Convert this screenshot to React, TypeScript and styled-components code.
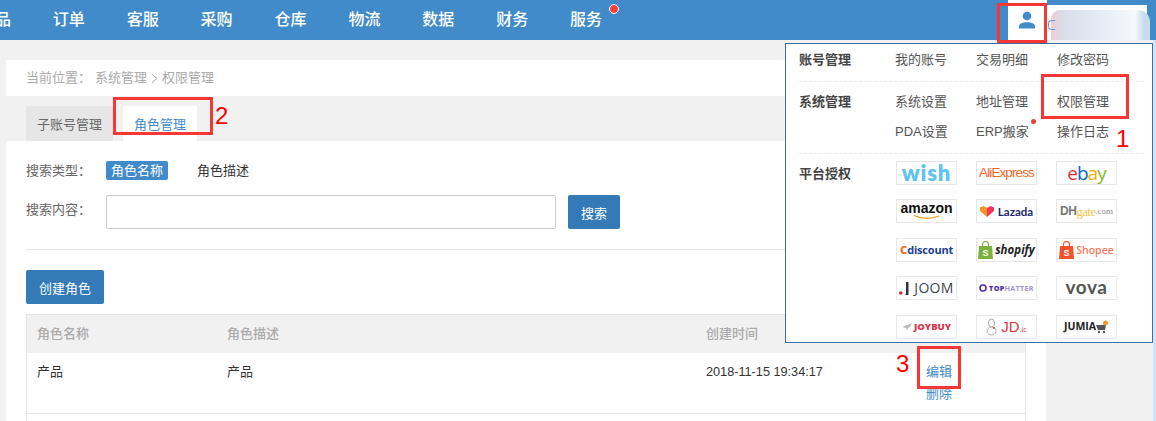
import React from 'react';
import styled, { createGlobalStyle } from 'styled-components';

const Global = createGlobalStyle`
  html, body { margin: 0; padding: 0; background: #f1f1f1; }
  body { font-family: "Liberation Sans", "Noto Sans CJK SC", sans-serif; font-size: 13px; color: #333; }
  * { box-sizing: border-box; }
`;

const Page = styled.div`
  position: relative;
  width: 1156px;
  height: 421px;
  overflow: hidden;
  background: #f1f1f1;
`;

const Header = styled.header`
  display: flex;
  height: 40px;
  background: #428bca;
`;
const Nav = styled.nav`
  display: flex;
  margin-left: -42px;
`;
const NavItem = styled.a`
  position: relative;
  display: block;
  width: 73.9px;
  line-height: 40px;
  text-align: center;
  color: #fff;
  font-size: 16px;
  font-weight: 500;
`;
const NavDot = styled.i`
  position: absolute;
  right: 4px;
  top: 4px;
  width: 10px;
  height: 10px;
  border-radius: 50%;
  background: #f0413c;
  border: 1px solid #fff;
`;
const UserArea = styled.div`
  margin-left: auto;
  margin-right: 9px;
  height: 40px;
  display: flex;
  align-items: flex-end;
`;
const UserIcon = styled.div`
  width: 39px;
  height: 40px;
  padding-right: 2px;
  display: flex;
  align-items: center;
  justify-content: center;
  background: #fff;
`;
const NameBox = styled.div`
  position: relative;
  width: 100px;
  height: 35px;
  background: #fff;
`;
const BlurredName = styled.div`
  position: absolute;
  left: 4px;
  top: 5px;
  width: 99px;
  height: 30px;
  border-radius: 9px 12px 0 0;
  background: linear-gradient(90deg, #eacdd5 0, #d9dfeb 14%, #dfe8f3 40%, #ebf1f8 62%, #f6f9fc 85%, #c8dbee 94%, #c8dbee 100%);
  &::before {
    content: '';
    position: absolute;
    left: -3px;
    top: 10px;
    width: 6px;
    height: 8px;
    border: 1px solid #5b9bd5;
    border-right: 0;
    border-radius: 4px 0 0 4px;
  }
`;

const Body = styled.div`
  display: flex;
  height: 381px;
`;
const Main = styled.main`
  width: 1040px;
  margin: 20px 0 0 6px;
`;
const Edge = styled.div`
  margin-left: auto;
  width: 3px;
  background: #d3e3f5;
`;

const Crumb = styled.div`
  height: 36px;
  line-height: 36px;
  background: #fff;
  padding-left: 20px;
  color: #aaa;
  font-size: 13px;
  display: flex;
  align-items: center;
`;
const CrumbLabel = styled.span`
  margin-right: 2px;
  width: 67px;
`;
const CrumbArrow = styled.svg`
  width: 7px;
  height: 11px;
  margin: 0 4px;
`;
const Tabs = styled.div`
  display: flex;
  gap: 10px;
  padding: 10px 0 0 20px;
`;
const Tab = styled.a<{ $active?: boolean }>`
  height: 35px;
  line-height: 37px;
  text-align: center;
  font-size: 13px;
  width: ${p => (p.$active ? 74 : 87)}px;
  background: ${p => (p.$active ? '#fff' : '#e6e6e6')};
  color: ${p => (p.$active ? '#428bca' : '#666')};
`;
const Panel = styled.section`
  background: #fff;
  padding: 20px 20px 0;
  height: 280px;
`;
const FormRow = styled.div`
  display: flex;
  align-items: flex-start;
`;
const SearchRow = styled(FormRow)`
  margin-top: 15px;
  padding-bottom: 20px;
  border-bottom: 1px solid #e6e6e6;
`;
const FormLabel = styled.label`
  width: 80px;
  color: #666;
  line-height: 19px;
  font-size: 13px;
`;
const TypeTag = styled.a<{ $active?: boolean }>`
  width: ${p => (p.$active ? 62 : 52)}px;
  height: 19px;
  line-height: 19px;
  text-align: center;
  border-radius: 2px;
  font-size: 13px;
  margin-right: 29px;
  color: ${p => (p.$active ? '#fff' : '#333')};
  background: ${p => (p.$active ? '#428bca' : 'transparent')};
`;
const SearchLabel = styled(FormLabel)`
  line-height: 29px;
`;
const SearchInput = styled.input`
  width: 450px;
  height: 34px;
  border: 1px solid #ccc;
  border-radius: 2px;
  background: #fff;
`;
const PrimaryButton = styled.button`
  height: 34px;
  border: 0;
  border-radius: 2px;
  background: #337ab7;
  color: #fff;
  font: 13px "Liberation Sans", "Noto Sans CJK SC", sans-serif;
`;
const SearchButton = styled(PrimaryButton)`
  width: 52px;
  margin-left: 12px;
`;
const CreateButton = styled(PrimaryButton)`
  display: block;
  width: 78px;
  margin: 20px 0 10px;
`;
const Table = styled.div`
  width: 1000px;
  border: 1px solid #e6e6e6;
  border-bottom: 0;
`;
const gridCols = '190px 479px 220px 1fr';
const HeadRow = styled.div`
  display: grid;
  grid-template-columns: ${gridCols};
  height: 38px;
  line-height: 37px;
  padding-left: 10px;
  background: #f1f1f1;
  color: #aaa;
  font-size: 13px;
  font-weight: 500;
`;
const DataRow = styled.div`
  display: grid;
  grid-template-columns: ${gridCols};
  height: 61px;
  padding: 8px 0 0 10px;
  line-height: 22px;
  font-size: 13px;
  color: #333;
  border-bottom: 1px solid #e6e6e6;
`;
const DateCell = styled.span`
  font-size: 12.7px;
`;
const Actions = styled.div`
  display: flex;
  flex-direction: column;
  align-items: flex-start;
`;
const ActionLink = styled.a`
  color: #428bca;
  font-size: 13px;
`;
const EmptyRow = styled.div`
  height: 20px;
`;

const Menu = styled.div`
  position: absolute;
  left: 785px;
  top: 43px;
  width: 368px;
  height: 300px;
  background: #fff;
  border: 1px solid #3f6f9f;
  padding: 0 13px;
  z-index: 2;
`;
const MenuSection = styled.div<{ $pad: string; $last?: boolean }>`
  display: flex;
  margin-right: -5px;
  border-bottom: ${p => (p.$last ? '0' : '1px dashed #e8e8e8')};
  padding: ${p => p.$pad};
`;
const SectionName = styled.div`
  width: 96px;
  line-height: 26px;
  font-weight: 700;
  color: #444;
  font-size: 13px;
`;
const LinkGrid = styled.div`
  display: grid;
  grid-template-columns: 81px 81px 80px;
  grid-auto-rows: 30px;
  flex: 1;
`;
const MenuLink = styled.a`
  position: relative;
  width: max-content;
  line-height: 22px;
  margin-top: 2px;
  color: #555;
  font-size: 13px;
`;
const MenuDot = styled.i`
  position: absolute;
  right: -7px;
  top: -2px;
  width: 5px;
  height: 5px;
  border-radius: 50%;
  background: #ee3b3b;
`;
const LogoGrid = styled.div`
  display: grid;
  grid-template-columns: repeat(3, 61px);
  grid-auto-rows: 24px;
  column-gap: 19px;
  row-gap: 14.4px;
  margin-left: 1px;
`;
const LogoCell = styled.div`
  display: flex;
  align-items: center;
  justify-content: center;
  gap: 2px;
  border: 1px solid #e8e8e8;
  white-space: nowrap;
  background: #fff;
`;
const LogoText = styled.span<{ $c: string; $s: number; $w?: number; $f?: string; $i?: boolean; $ls?: number; $ml?: number }>`
  color: ${p => p.$c};
  font-size: ${p => p.$s}px;
  font-weight: ${p => p.$w ?? 700};
  font-family: ${p => p.$f ?? '"Open Sans", sans-serif'};
  font-style: ${p => (p.$i ? 'italic' : 'normal')};
  letter-spacing: ${p => p.$ls ?? 0}px;
  margin-left: ${p => p.$ml ?? 0}px;
  line-height: 1;
`;
const AmazonStack = styled.div`
  display: flex;
  flex-direction: column;
  align-items: center;
  margin-top: -1px;
`;

const RedBox = styled.div<{ $x: number; $y: number; $w: number; $h: number }>`
  position: absolute;
  left: ${p => p.$x}px;
  top: ${p => p.$y}px;
  width: ${p => p.$w}px;
  height: ${p => p.$h}px;
  border: 3px solid #f73636;
  z-index: 3;
`;
const RedNum = styled.span<{ $x: number; $y: number }>`
  position: absolute;
  left: ${p => p.$x}px;
  top: ${p => p.$y}px;
  font: 24px/28px "Liberation Sans", sans-serif;
  color: #f00;
  z-index: 3;
`;

const navs = ['产品', '订单', '客服', '采购', '仓库', '物流', '数据', '财务', '服务'];

const Bag = ({ c }: { c: string }) => (
  <svg width="15" height="18" viewBox="0 0 15 18">
    <path d="M1 5h13l1 13H0z" fill={c} />
    <path d="M4.500 6V3.500a3 3 0 0 1 6 0V6" stroke={c} fill="none" strokeWidth="1.200" />
    <text x="7.500" y="15" textAnchor="middle" fontSize="9" fontWeight="700" fill="#fff" fontFamily="Liberation Sans">S</text>
  </svg>
);

export default function App() {
  return (
    <Page>
      <Global />
      <Header>
        <Nav>
          {navs.map((n, i) => (
            <NavItem key={n}>
              {n}
              {i === navs.length - 1 && <NavDot />}
            </NavItem>
          ))}
        </Nav>
        <UserArea>
          <UserIcon>
            <svg width="18" height="18" viewBox="0 0 18 18">
              <circle cx="9" cy="5" r="4.300" fill="#428bca" />
              <path d="M1 17.500v-2c0-3 4-4.200 8-4.200s8 1.200 8 4.200v2z" fill="#428bca" />
            </svg>
          </UserIcon>
          <NameBox>
            <BlurredName />
          </NameBox>
        </UserArea>
      </Header>
      <Body>
        <Main>
          <Crumb>
            <CrumbLabel>当前位置：</CrumbLabel>
            <span>系统管理</span>
            <CrumbArrow viewBox="0 0 7 11">
              <path d="M1 1l5 4.500L1 10" stroke="#aaa" fill="none" />
            </CrumbArrow>
            <span>权限管理</span>
          </Crumb>
          <Tabs>
            <Tab>子账号管理</Tab>
            <Tab $active>角色管理</Tab>
          </Tabs>
          <Panel>
            <FormRow>
              <FormLabel>搜索类型：</FormLabel>
              <TypeTag $active>角色名称</TypeTag>
              <TypeTag>角色描述</TypeTag>
            </FormRow>
            <SearchRow>
              <SearchLabel>搜索内容：</SearchLabel>
              <SearchInput />
              <SearchButton>搜索</SearchButton>
            </SearchRow>
            <CreateButton>创建角色</CreateButton>
            <Table>
              <HeadRow>
                <span>角色名称</span>
                <span>角色描述</span>
                <span>创建时间</span>
              </HeadRow>
              <DataRow>
                <span>产品</span>
                <span>产品</span>
                <DateCell>2018-11-15 19:34:17</DateCell>
                <Actions>
                  <ActionLink>编辑</ActionLink>
                  <ActionLink>删除</ActionLink>
                </Actions>
              </DataRow>
              <EmptyRow />
            </Table>
          </Panel>
        </Main>
        <Edge />
      </Body>

      <Menu>
        <MenuSection $pad="3px 0 4px">
          <SectionName>账号管理</SectionName>
          <LinkGrid>
            <MenuLink>我的账号</MenuLink>
            <MenuLink>交易明细</MenuLink>
            <MenuLink>修改密码</MenuLink>
          </LinkGrid>
        </MenuSection>
        <MenuSection $pad="7px 0 4px">
          <SectionName>系统管理</SectionName>
          <LinkGrid>
            <MenuLink>系统设置</MenuLink>
            <MenuLink>地址管理</MenuLink>
            <MenuLink>权限管理</MenuLink>
            <MenuLink>PDA设置</MenuLink>
            <MenuLink>ERP搬家<MenuDot /></MenuLink>
            <MenuLink>操作日志</MenuLink>
          </LinkGrid>
        </MenuSection>
        <MenuSection $pad="7px 0 0" $last>
          <SectionName>平台授权</SectionName>
          <LogoGrid>
            <LogoCell><LogoText $c="#5ec5ee" $s={22} $w={800} $f='"Lato", sans-serif' $ls={0.8}>wish</LogoText></LogoCell>
            <LogoCell><LogoText $c="#f0672a" $s={13.500} $w={400} $f='"Liberation Sans", sans-serif' $ls={-0.9}>AliExpress</LogoText></LogoCell>
            <LogoCell>
              <LogoText $c="#e53238" $s={19} $w={400} $ls={-1}>e</LogoText>
              <LogoText $c="#0064d2" $s={19} $w={400} $ls={-1} $ml={-2}>b</LogoText>
              <LogoText $c="#f5af02" $s={19} $w={400} $ls={-1} $ml={-2}>a</LogoText>
              <LogoText $c="#86b817" $s={19} $w={400} $ls={-1} $ml={-2}>y</LogoText>
            </LogoCell>
            <LogoCell>
              <AmazonStack>
                <LogoText $c="#111" $s={14} $f='"Liberation Sans", sans-serif'>amazon</LogoText>
                <svg width="28" height="5" viewBox="0 0 28 5"><path d="M1 0.500Q13 6 26 1" stroke="#f09a1a" strokeWidth="1.300" fill="none" /></svg>
              </AmazonStack>
            </LogoCell>
            <LogoCell>
              <svg width="14" height="11" viewBox="0 0 14 11">
                <path d="M7 11L0 5V1.500L3.500 0 7 2z" fill="#f7931e" />
                <path d="M7 11l7-6V1.500L10.500 0 7 2z" fill="#f0365c" />
              </svg>
              <LogoText $c="#1c2a6b" $s={11.500} $f='"Lato", sans-serif' $ml={2}>Lazada</LogoText>
            </LogoCell>
            <LogoCell>
              <LogoText $c="#777" $s={12} $f='"Liberation Sans", sans-serif' $ls={-0.5}>DH</LogoText>
              <LogoText $c="#ecc94a" $s={13} $w={400} $f='"Liberation Serif", serif' $ls={-0.7} $ml={-2}>gate</LogoText>
              <LogoText $c="#888" $s={9} $w={400} $f='"Liberation Serif", serif' $ml={-2}>.com</LogoText>
            </LogoCell>
            <LogoCell>
              <LogoText $c="#f0701c" $s={11} $w={800}>C</LogoText>
              <LogoText $c="#1d3f8f" $s={11} $ls={-0.2} $ml={-2}>discount</LogoText>
            </LogoCell>
            <LogoCell>
              <Bag c="#7ab33a" />
              <LogoText $c="#222" $s={11.500} $i>shopify</LogoText>
            </LogoCell>
            <LogoCell>
              <Bag c="#f4502a" />
              <LogoText $c="#f57a5c" $s={10.500} $w={600}>Shopee</LogoText>
            </LogoCell>
            <LogoCell>
              <svg width="10" height="13" viewBox="0 0 10 13" style={{ marginRight: 3 }}>
                <circle cx="1.800" cy="11" r="1.800" fill="#d7292a" />
                <path d="M5 13c2 0 2-1 2-2V0h2.500v13z" fill="#2e3342" />
              </svg>
              <LogoText $c="#3d4250" $s={14} $w={400} $ls={0.3}>JOOM</LogoText>
            </LogoCell>
            <LogoCell>
              <svg width="8" height="8" viewBox="0 0 8 8"><circle cx="4" cy="4" r="3" stroke="#4e2fa5" strokeWidth="1.600" fill="none" /></svg>
              <LogoText $c="#4e2fa5" $s={7.200} $w={800} $ls={0.3}>TOP</LogoText>
              <LogoText $c="#a494d4" $s={7.200} $w={700} $ls={0.3} $ml={-2}>HATTER</LogoText>
            </LogoCell>
            <LogoCell><LogoText $c="#555" $s={19} $w={700} $f='"Lato", sans-serif' $ls={0.5} style={{ marginTop: -3 }}>vova</LogoText></LogoCell>
            <LogoCell>
              <svg width="10" height="8" viewBox="0 0 10 8"><path d="M0 4l5-2 5-2-2 4-2 1-1 3-1-3z" fill="#bbb" /></svg>
              <LogoText $c="#d8394c" $s={9.500} $w={800}>JOYBUY</LogoText>
            </LogoCell>
            <LogoCell>
              <svg width="11" height="18" viewBox="0 0 11 18" style={{ marginRight: 2 }}>
                <ellipse cx="5.500" cy="5" rx="3" ry="4" fill="#fff" stroke="#aaa" />
                <ellipse cx="5.500" cy="13" rx="4.500" ry="4" fill="#fff" stroke="#aaa" />
                <circle cx="8" cy="10" r="1" fill="#d8393b" />
              </svg>
              <LogoText $c="#d8393b" $s={15} $w={400} $f='"Liberation Sans", sans-serif'>JD</LogoText>
              <LogoText $c="#d8393b" $s={7} $w={400} $ml={-2} style={{ marginTop: 5 }}>.ic</LogoText>
            </LogoCell>
            <LogoCell>
              <LogoText $c="#222" $s={10.500} $w={700}>JUMIA</LogoText>
              <svg width="13" height="14" viewBox="0 0 13 14" style={{ marginLeft: -2 }}>
                <path d="M0 5h10l-1 5H2z" fill="#555" />
                <circle cx="9.500" cy="3" r="2.500" fill="#f29a2e" />
                <circle cx="3" cy="12" r="1.200" fill="#555" />
                <circle cx="8" cy="12" r="1.200" fill="#555" />
              </svg>
            </LogoCell>
          </LogoGrid>
        </MenuSection>
      </Menu>

      <RedBox $x={997} $y={3} $w={50} $h={40} />
      <RedBox $x={1041} $y={74} $w={88} $h={45} />
      <RedBox $x={113} $y={97} $w={100} $h={38} />
      <RedBox $x={917} $y={346} $w={44} $h={43} />
      <RedNum $x={215} $y={102}>2</RedNum>
      <RedNum $x={1116} $y={125}>1</RedNum>
      <RedNum $x={896} $y={350}>3</RedNum>
    </Page>
  );
}
